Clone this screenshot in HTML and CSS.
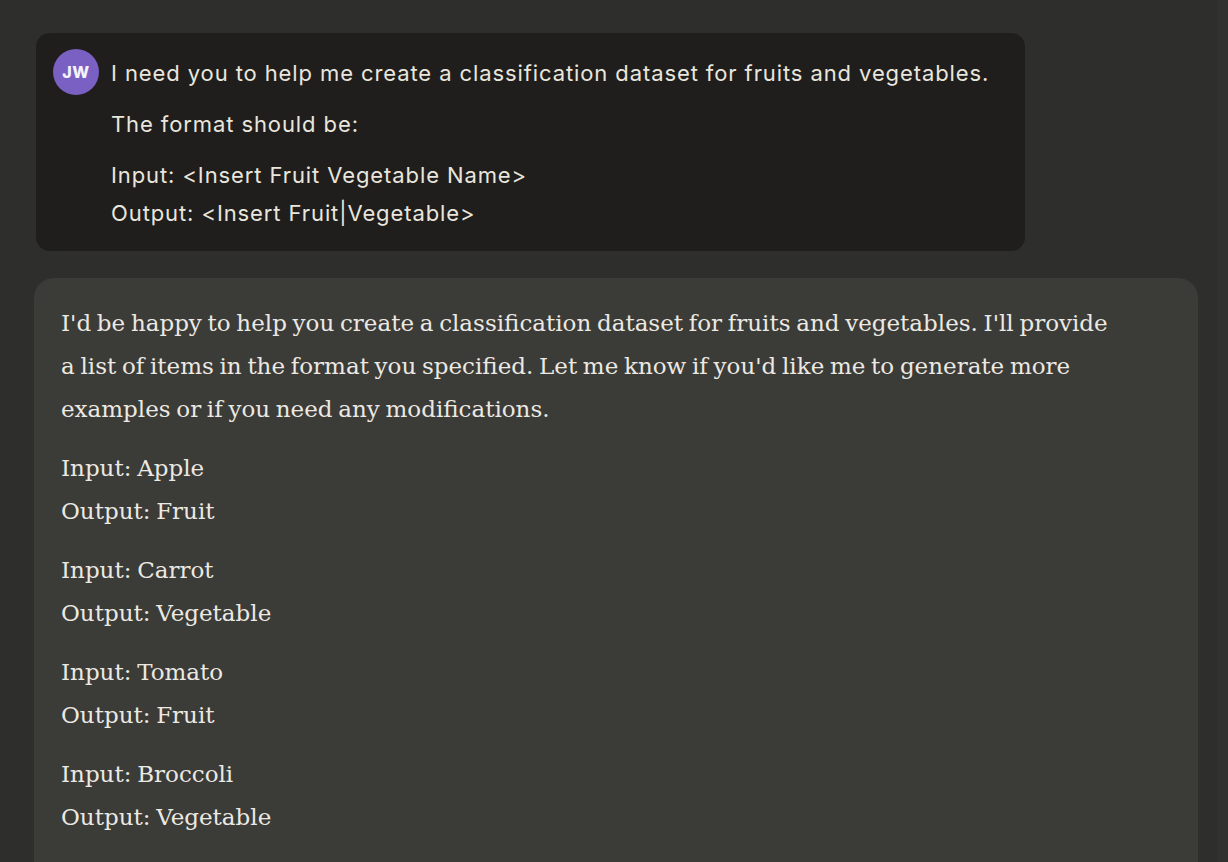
FILE: index.html
```html
<!DOCTYPE html>
<html lang="en">
<head>
<meta charset="utf-8">
<title>Chat</title>
<link rel="stylesheet" href="styles.css">
</head>
<body>
<div class="page">
  <main class="thread">
    <section class="msg-user">
      <div class="avatar">JW</div>
      <div class="user-text">
        <p>I need you to help me create a classification dataset for fruits and vegetables.</p>
        <p>The format should be:</p>
        <p>Input: &lt;Insert Fruit Vegetable Name&gt;<br>Output: &lt;Insert Fruit|Vegetable&gt;</p>
      </div>
    </section>
    <section class="msg-assistant">
      <p>I'd be happy to help you create a classification dataset for fruits and vegetables. I'll provide a list of items in the format you specified. Let me know if you'd like me to generate more examples or if you need any modifications.</p>
      <p>Input: Apple<br>Output: Fruit</p>
      <p>Input: Carrot<br>Output: Vegetable</p>
      <p>Input: Tomato<br>Output: Fruit</p>
      <p>Input: Broccoli<br>Output: Vegetable</p>
    </section>
  </main>
  <div class="edge"></div>
</div>
</body>
</html>
```
FILE: styles.css
```css
html, body {
  margin: 0;
  padding: 0;
  height: 100%;
  overflow: hidden;
}
body {
  background: #2e2e2c;
}
.page {
  display: flex;
  height: 100%;
}
.thread {
  flex: 1;
  padding: 33px 19px 0 34px;
  display: flex;
  flex-direction: column;
  gap: 27px;
}
.edge {
  width: 11px;
  background: #31312f;
}
.msg-user {
  margin-left: 2px;
  width: 989px;
  box-sizing: border-box;
  background: #1f1e1c;
  border-radius: 14px;
  padding: 16px 20px 19px 17px;
  display: flex;
  gap: 12px;
  align-items: flex-start;
}
.avatar {
  flex: none;
  width: 46px;
  height: 46px;
  border-radius: 50%;
  background: #7a60c2;
  color: #f4f1fb;
  font-family: "Inter", "DejaVu Sans", sans-serif;
  font-weight: 800;
  font-size: 16px;
  display: flex;
  align-items: center;
  justify-content: center;
  letter-spacing: 0.5px;
}
.user-text {
  margin-top: 5px;
  font-family: "Inter", "DejaVu Sans", sans-serif;
  font-size: 22px;
  letter-spacing: 0.9px;
  line-height: 38px;
  color: #e9e6de;
}
.user-text p {
  margin: 0 0 13px;
}
.user-text p:last-child {
  margin-bottom: 0;
}
.msg-assistant {
  flex: 1;
  background: #3b3b38;
  border-radius: 20px 20px 0 0;
  padding: 24px 82px 20px 27px;
  font-family: "DejaVu Serif", "Liberation Serif", serif;
  font-size: 23px;
  word-spacing: -1.6px;
  line-height: 43px;
  color: #ece9e2;
}
.msg-assistant p {
  margin: 0 0 16px;
}
```
